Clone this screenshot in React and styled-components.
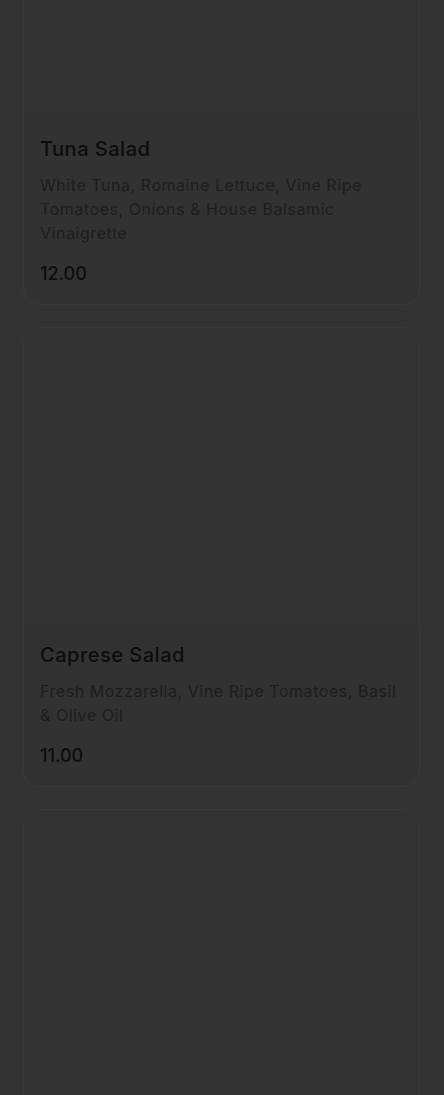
import styled, { createGlobalStyle } from "styled-components";

const GlobalStyle = createGlobalStyle`
  html, body {
    margin: 0;
    padding: 0;
    background: #333333;
  }
  body {
    font-family: Inter, "Noto Sans", sans-serif;
    overflow: hidden;
  }
`;

const MenuList = styled.main`
  display: flex;
  flex-direction: column;
  gap: 22px;
  padding: 0 24px 24px 23px;
  margin-top: -179px;
`;

const Card = styled.article`
  display: flex;
  flex-direction: column;
  border: 1px solid #393939;
  border-radius: 16px;
  background: #323232;
  overflow: hidden;
`;

const Picture = styled.div`
  height: 297px;
  background: #333333;
`;

const Body = styled.div`
  display: flex;
  flex-direction: column;
  padding: 16px 16px 17px 16px;
`;

const Title = styled.h3`
  margin: 0 0 10px;
  font-size: 20px;
  line-height: 28px;
  font-weight: 500;
  letter-spacing: 0.5px;
  color: #0c0c0c;
`;

const Description = styled.p`
  margin: 0 0 16px;
  font-size: 16px;
  line-height: 24px;
  font-weight: 400;
  letter-spacing: 0.55px;
  color: #1d1d1d;
`;

const Price = styled.span`
  font-size: 18px;
  line-height: 26px;
  font-weight: 500;
  color: #0c0c0c;
`;

const items = [
  {
    name: "Tuna Salad",
    desc: "White Tuna, Romaine Lettuce, Vine Ripe Tomatoes, Onions & House Balsamic Vinaigrette",
    price: "12.00",
  },
  {
    name: "Caprese Salad",
    desc: "Fresh Mozzarella, Vine Ripe Tomatoes, Basil & Olive Oil",
    price: "11.00",
  },
  {
    name: "Greek Salad",
    desc: "Romaine Lettuce, Feta Cheese, Kalamata Olives, Cucumbers & Red Onions",
    price: "11.00",
  },
];

export default function App() {
  return (
    <>
      <GlobalStyle />
      <MenuList>
        {items.map((item) => (
          <Card key={item.name}>
            <Picture />
            <Body>
              <Title>{item.name}</Title>
              <Description>{item.desc}</Description>
              <Price>{item.price}</Price>
            </Body>
          </Card>
        ))}
      </MenuList>
    </>
  );
}
